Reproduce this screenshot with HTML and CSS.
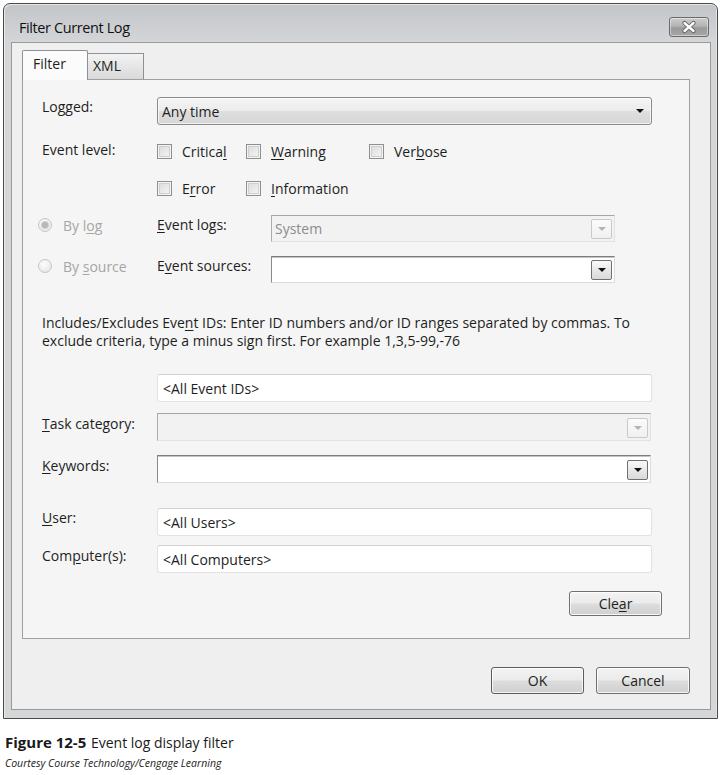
FILE: index.html
```html
<!DOCTYPE html>
<html>
<head>
<meta charset="utf-8">
<title>Filter Current Log</title>
<link rel="stylesheet" href="styles.css">
</head>
<body>
<div class="window">
  <div class="titlebar">
    <span class="title">Filter Current Log</span>
    <span class="close">
      <svg width="40" height="20" viewBox="0 0 40 20">
        <path d="M15.5 6 L24.5 14 M24.5 6 L15.5 14" stroke="#5a5a5a" stroke-width="4.2" stroke-linecap="round"/>
        <path d="M15.5 6 L24.5 14 M24.5 6 L15.5 14" stroke="#ffffff" stroke-width="2.4" stroke-linecap="round"/>
      </svg>
    </span>
  </div>
  <div class="client">
    <div class="tabs">
      <div class="tab active">Filter</div>
      <div class="tab">XML</div>
    </div>
    <div class="panel">
      <div class="row row-logged">
        <span class="label">Lo<u>g</u>ged:</span>
        <div class="dropdown">
          <span>Any time</span>
          <span class="tri"></span>
        </div>
      </div>
      <div class="row row-level1">
        <span class="label">Event level:</span>
        <span class="check w1"><span class="box"></span><span>Critica<u>l</u></span></span>
        <span class="check w2"><span class="box"></span><span><u>W</u>arning</span></span>
        <span class="check"><span class="box"></span><span>Ver<u>b</u>ose</span></span>
      </div>
      <div class="row row-level2">
        <span class="label"></span>
        <span class="check w1"><span class="box"></span><span>E<u>r</u>ror</span></span>
        <span class="check w2"><span class="box"></span><span><u>I</u>nformation</span></span>
      </div>
      <div class="row row-bylog">
        <span class="radio-group"><span class="radio"><span class="dot"></span></span><span>By l<u>o</u>g</span></span>
        <span class="label2"><u>E</u>vent logs:</span>
        <div class="combo combo-short disabled">
          <span class="value">System</span>
          <span class="arrow"><span class="tri"></span></span>
        </div>
      </div>
      <div class="row row-bysource">
        <span class="radio-group"><span class="radio"></span><span>By <u>s</u>ource</span></span>
        <span class="label2">E<u>v</u>ent sources:</span>
        <div class="combo combo-short">
          <span class="value"></span>
          <span class="arrow"><span class="tri"></span></span>
        </div>
      </div>
      <p class="para">Includes/Excludes Eve<u>n</u>t IDs: Enter ID numbers and/or ID ranges separated by commas. To<br>exclude criteria, type a minus sign first. For example 1,3,5-99,-76</p>
      <div class="row row-ids">
        <span class="label"></span>
        <div class="textbox">&lt;All Event IDs&gt;</div>
      </div>
      <div class="row row-task">
        <span class="label"><u>T</u>ask category:</span>
        <div class="combo combo-wide disabled">
          <span class="value"></span>
          <span class="arrow"><span class="tri"></span></span>
        </div>
      </div>
      <div class="row row-keywords">
        <span class="label"><u>K</u>eywords:</span>
        <div class="combo combo-wide">
          <span class="value"></span>
          <span class="arrow"><span class="tri"></span></span>
        </div>
      </div>
      <div class="row row-user">
        <span class="label"><u>U</u>ser:</span>
        <div class="textbox">&lt;All Users&gt;</div>
      </div>
      <div class="row row-computer">
        <span class="label">Com<u>p</u>uter(s):</span>
        <div class="textbox">&lt;All Computers&gt;</div>
      </div>
      <div class="row row-clear">
        <span class="button btn-clear"><span>Cle<u>a</u>r</span></span>
      </div>
    </div>
    <div class="footer">
      <span class="button btn-ok">OK</span>
      <span class="button btn-cancel">Cancel</span>
    </div>
  </div>
</div>
<div class="caption">
  <div class="fig"><b>Figure 12-5</b> Event log display filter</div>
  <div class="courtesy">Courtesy Course Technology/Cengage Learning</div>
</div>
</body>
</html>
```
FILE: styles.css
```css
* { box-sizing: border-box; }

body {
  margin: 0;
  background: #ffffff;
  font-family: "Open Sans", "DejaVu Sans", sans-serif;
  font-size: 14px;
  color: #1e1e1e;
}

u { text-decoration: underline; text-underline-offset: 2px; text-decoration-thickness: 1px; }

.window {
  margin: 3px 0 0 3px;
  width: 715px;
  border: 1px solid #4a4a4a;
  border-radius: 7px 7px 0 0;
  background: linear-gradient(#c3c6c9 0px, #d3d5d7 38px, #d5d6d7 100%);
  padding: 0 6px 8px 7px;
  box-shadow: inset 1px 1px 0 #e8e8e8, inset -1px 0 0 #e4e4e4;
}

.titlebar {
  height: 38px;
  display: flex;
  justify-content: space-between;
  align-items: flex-start;
}

.title {
  margin: 14px 0 0 8px;
  line-height: 20px;
  font-size: 14.5px;
  letter-spacing: -0.4px;
  color: #111;
}

.close {
  margin: 13px 2px 0 0;
  width: 40px;
  height: 20px;
  border: 1px solid #6a6a6a;
  border-radius: 3px;
  background: linear-gradient(#cdcdcd 0%, #b3b3b3 45%, #9a9a9a 55%, #a6a6a6 100%);
  box-shadow: inset 0 0 0 1px rgba(255,255,255,0.45);
  display: flex;
  align-items: center;
  justify-content: center;
}
.close svg { display: block; margin: -1px; }

.client {
  border: 1px solid #9a9a9a;
  background: #efefef;
  padding: 7px 20px 15px 10px;
}

.tabs {
  display: flex;
  align-items: flex-end;
  height: 29px;
}

.tab {
  border: 1px solid #8d9096;
  border-bottom: none;
  line-height: 22px;
}

.tab.active {
  position: relative;
  z-index: 1;
  width: 66px;
  height: 30px;
  margin-bottom: -1px;
  padding: 2px 0 0 10px;
  background: #fbfbfb;
  border-radius: 2px 2px 0 0;
}

.tab:not(.active) {
  width: 56px;
  height: 26px;
  border-left: none;
  padding: 1px 0 0 5px;
  background: linear-gradient(#f3f3f3, #e6e6e6 50%, #d9d9d9);
}

.panel {
  border: 1px solid #a0a0a0;
  background: #f5f5f5;
  padding: 17px 27px 22px 19px;
  display: flex;
  flex-direction: column;
}

.row {
  display: flex;
  align-items: center;
  height: 28px;
  flex: none;
}

.label, .label2 {
  flex: none;
  align-self: flex-start;
  line-height: 20px;
  padding-top: 0;
}
.label { width: 115px; }
.label2 { width: 114px; }
.row-task .label, .row-keywords .label, .row-computer .label { padding-top: 1px; }
.row-level1 .label { align-self: center; margin-top: -3px; }

.row-level1 { height: 20px; margin-top: 16px; }
.row-level2 { height: 20px; margin-top: 17px; }
.row-bylog { height: 27px; margin-top: 17px; }
.row-bysource { height: 27px; margin-top: 14px; }
.row-ids { margin-top: 24px; }
.row-task { margin-top: 11px; }
.row-keywords { margin-top: 14px; }
.row-user { margin-top: 25px; }
.row-computer { margin-top: 9px; }
.row-clear { height: 25px; margin-top: 18px; justify-content: flex-end; }

.para {
  margin: 31px 0 0 0;
  line-height: 18px;
  height: 36px;
  white-space: nowrap;
}

.dropdown {
  width: 495px;
  height: 28px;
  border: 1px solid #8a8a8a;
  border-radius: 3px;
  background: linear-gradient(#f4f4f4 0%, #ececec 48%, #dedede 52%, #d6d6d6 100%);
  box-shadow: inset 0 0 0 1px rgba(255,255,255,0.7);
  display: flex;
  align-items: center;
  justify-content: space-between;
  padding: 0 7px 0 4px;
}

.tri {
  width: 0;
  height: 0;
  border-left: 4px solid transparent;
  border-right: 4px solid transparent;
  border-top: 4px solid #111;
}

.check { display: flex; align-items: center; flex: none; }
.check.w1 { width: 89px; }
.check.w2 { width: 123px; }
.box {
  width: 15px;
  height: 15px;
  margin-right: 10px;
  border: 1px solid #8e8f8f;
  background: linear-gradient(135deg, #d9d9d9, #f7f7f7);
  box-shadow: inset 0 0 0 1px #f4f4f4, inset 0 0 0 2px #cfcfcf;
}

.radio-group {
  width: 119px;
  margin-left: -4px;
  height: 20px;
  display: flex;
  align-items: center;
  align-self: flex-start;
  color: #a6a6a6;
  flex: none;
}
.radio-group u { text-decoration-color: #a6a6a6; }
.radio {
  width: 14px;
  height: 14px;
  border-radius: 50%;
  border: 1px solid #c6c6c6;
  background: radial-gradient(circle at 40% 35%, #fdfdfd, #e2e2e2);
  margin-right: 11px;
  display: flex;
  align-items: center;
  justify-content: center;
}
.dot {
  width: 6px;
  height: 6px;
  border-radius: 50%;
  background: #b8b8b8;
  box-shadow: 0 0 0 1px #d0d0d0;
}

.combo {
  height: 28px;
  background: #ffffff;
  border: 1px solid;
  border-color: #7d7d7d #dcdcdc #dcdcdc #8a8a8a;
  box-shadow: inset 0 1px 0 #c4c4c4;
  display: flex;
  align-items: center;
  justify-content: space-between;
  padding: 0 2px 0 2px;
}
.combo-short { width: 344px; height: 27px; }
.combo-wide { width: 494px; }
.combo .value { padding-left: 1px; }

.arrow {
  width: 21px;
  height: 20px;
  border: 1px solid #707070;
  border-radius: 2px;
  background: linear-gradient(#fafafa, #e8e8e8 50%, #dadada);
  display: flex;
  align-items: center;
  justify-content: center;
  margin-top: 1px;
}

.combo.disabled {
  background: #f2f2f2;
  border-color: #a6a6a6 #e2e2e2 #e2e2e2 #acacac;
  box-shadow: none;
  color: #8c8c8c;
}
.combo.disabled .arrow {
  border-color: #c9c9c9;
  background: linear-gradient(#fbfbfb, #f0f0f0);
}
.combo.disabled .tri { border-top-color: #b4b4b4; }

.textbox {
  width: 495px;
  height: 28px;
  background: #ffffff;
  border: 1px solid #e2e2e2;
  border-top-color: #d2d2d2;
  border-radius: 3px;
  padding: 0 5px;
  display: flex;
  align-items: center;
}

.button {
  display: flex;
  align-items: center;
  justify-content: center;
  border: 1px solid #707070;
  border-radius: 3px;
  background: linear-gradient(#f3f3f3 0%, #ebebeb 48%, #dddddd 52%, #cfcfcf 100%);
  box-shadow: inset 0 0 0 1px rgba(255,255,255,0.8);
  flex: none;
}
.btn-clear { width: 93px; height: 25px; }

.footer {
  display: flex;
  justify-content: flex-end;
  gap: 12px;
  margin-top: 28px;
}
.btn-ok { width: 93px; height: 27px; border-color: #5c5c5c; }
.btn-cancel { width: 94px; height: 27px; }

.caption {
  margin: 13px 0 0 5px;
}
.fig {
  line-height: 20px;
  font-size: 14px;
  color: #1a1a1a;
}
.fig b { font-size: 15px; font-weight: 700; margin-right: 1px; }
.courtesy {
  margin-top: 3px;
  font-size: 10.5px;
  font-style: italic;
  line-height: 14px;
  color: #222;
}
```
